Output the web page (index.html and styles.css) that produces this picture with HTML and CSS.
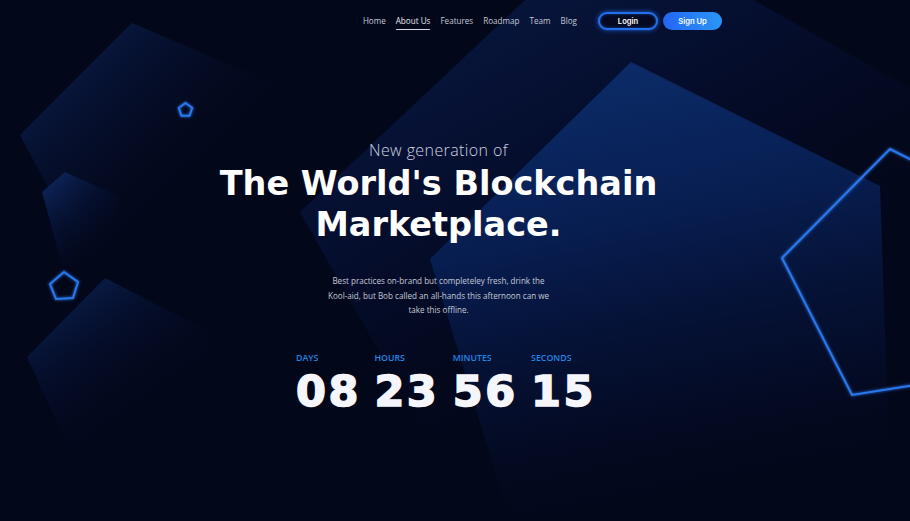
FILE: index.html
```html
<!DOCTYPE html>
<html lang="en">
<head>
<meta charset="utf-8">
<title>Blockchain Marketplace</title>
<link rel="stylesheet" href="styles.css">
</head>
<body>
<div class="page">
  <svg class="bg" width="910" height="521" viewBox="0 0 910 521" aria-hidden="true">
    <defs>
      <linearGradient id="gB" x1="0.1" y1="0.05" x2="0.6" y2="0.9">
        <stop offset="0" stop-color="#0a1d4a" stop-opacity="1"/>
        <stop offset="0.45" stop-color="#06123a" stop-opacity="0.55"/>
        <stop offset="0.85" stop-color="#03071a" stop-opacity="0"/>
      </linearGradient>
      <linearGradient id="gA" x1="0.35" y1="0" x2="0.55" y2="1">
        <stop offset="0" stop-color="#0c2c68"/>
        <stop offset="0.35" stop-color="#082056" stop-opacity="0.9"/>
        <stop offset="0.7" stop-color="#061540" stop-opacity="0.45"/>
        <stop offset="1" stop-color="#03071a" stop-opacity="0"/>
      </linearGradient>
      <linearGradient id="gC" x1="0" y1="0.1" x2="0.75" y2="0.85">
        <stop offset="0" stop-color="#0b2254"/>
        <stop offset="0.4" stop-color="#071335" stop-opacity="0.6"/>
        <stop offset="0.85" stop-color="#03071a" stop-opacity="0"/>
      </linearGradient>
      <linearGradient id="gD" x1="0" y1="0" x2="0.9" y2="1">
        <stop offset="0" stop-color="#0e2c66"/>
        <stop offset="0.55" stop-color="#061337" stop-opacity="0.4"/>
        <stop offset="0.9" stop-color="#03071a" stop-opacity="0"/>
      </linearGradient>
      <linearGradient id="gE" x1="0" y1="0" x2="0.65" y2="0.9">
        <stop offset="0" stop-color="#0d2a64"/>
        <stop offset="0.45" stop-color="#061235" stop-opacity="0.55"/>
        <stop offset="0.9" stop-color="#03071a" stop-opacity="0"/>
      </linearGradient>
      <filter id="glow" x="-50%" y="-50%" width="200%" height="200%">
        <feGaussianBlur stdDeviation="1.6" result="b"/>
        <feMerge><feMergeNode in="b"/><feMergeNode in="SourceGraphic"/></feMerge>
      </filter>
    </defs>
    <polygon points="610,-80 950,110 900,480 480,530 300,212" fill="url(#gB)"/>
    <polygon points="631,62 880,186 890,480 510,520 430,259" fill="url(#gA)"/>
    <polygon points="132,23 285,88 275,255 95,275 20,135" fill="url(#gC)"/>
    <polygon points="65,172 118,196 112,258 62,265 42,192" fill="url(#gD)"/>
    <polygon points="105,278 210,332 218,462 78,468 27,357" fill="url(#gE)"/>
    <g fill="none" stroke="#2a78ee" stroke-linejoin="miter" filter="url(#glow)">
      <polygon points="185.5,103 192.2,107.8 189.6,115.7 181.4,115.7 178.8,107.8" stroke-width="2"/>
      <polygon points="64,272 78,282 73,298 56,299 50,284" stroke-width="2"/>
      <polygon points="890,149 782,258 852,395 1004,371 1028,219" stroke-width="2"/>
    </g>
  </svg>

  <header class="topbar">
    <nav class="menu">
      <a class="menu-link" href="#">Home</a>
      <a class="menu-link active" href="#">About Us</a>
      <a class="menu-link" href="#">Features</a>
      <a class="menu-link" href="#">Roadmap</a>
      <a class="menu-link" href="#">Team</a>
      <a class="menu-link" href="#">Blog</a>
    </nav>
    <div class="actions">
      <a class="btn btn-login" href="#">Login</a>
      <a class="btn btn-signup" href="#">Sign Up</a>
    </div>
  </header>

  <main class="hero">
    <p class="eyebrow">New generation of</p>
    <h1 class="title">The World's Blockchain<br>Marketplace.</h1>
    <p class="lead">Best practices on-brand but completeley fresh, drink the <span class="nowrap">Kool-aid,</span> but Bob called an all-hands this afternoon can we <span class="nowrap">take this offline.</span></p>
    <div class="countdown">
      <div class="unit"><span class="unit-label">Days</span><span class="unit-value">08</span></div>
      <div class="unit"><span class="unit-label">Hours</span><span class="unit-value">23</span></div>
      <div class="unit"><span class="unit-label">Minutes</span><span class="unit-value">56</span></div>
      <div class="unit"><span class="unit-label">Seconds</span><span class="unit-value">15</span></div>
    </div>
  </main>
</div>
</body>
</html>
```

FILE: styles.css
```css
* { box-sizing: border-box; }
html, body { margin: 0; padding: 0; }
body {
  background: #03071a;
  width: 910px;
  height: 521px;
  overflow: hidden;
  font-family: "Open Sans", "Noto Sans", sans-serif;
}
.page {
  position: relative;
  width: 910px;
  height: 521px;
  overflow: hidden;
  background: #03071a;
}
.bg {
  position: absolute;
  left: 0;
  top: 0;
  z-index: 0;
}
.topbar {
  position: relative;
  z-index: 1;
  display: flex;
  justify-content: flex-end;
  align-items: center;
  padding: 12px 188px 0 0;
  height: 30px;
}
.menu {
  display: flex;
  gap: 10px;
  margin-right: 21px;
}
.menu-link {
  position: relative;
  color: #c4c8d6;
  text-decoration: none;
  font-size: 8.1px;
  line-height: 18px;
}
.menu-link.active { color: #e6e8f0; }
.menu-link.active::after {
  content: "";
  position: absolute;
  left: 0;
  right: 0;
  bottom: 0;
  height: 1.5px;
  background: #d8dbe6;
  border-radius: 1px;
}
.actions {
  display: flex;
  gap: 5px;
}
.btn {
  display: flex;
  align-items: center;
  justify-content: center;
  height: 18px;
  border-radius: 9px;
  color: #ffffff;
  text-decoration: none;
  font-family: "Inter", "Liberation Sans", sans-serif;
  font-weight: 600;
  font-size: 7.6px;
}
.btn-login {
  width: 60px;
  background: #050a22;
  border: 2px solid #2270f0;
  box-shadow: 0 0 5px rgba(40, 120, 255, 0.75), inset 0 0 3px rgba(40, 120, 255, 0.5);
}
.btn-signup {
  width: 59px;
  background: linear-gradient(90deg, #2466f4 0%, #2a96f6 100%);
}
.hero {
  position: relative;
  z-index: 1;
  width: 877px;
  display: flex;
  flex-direction: column;
  align-items: center;
  text-align: center;
}
.eyebrow {
  margin: 110px 0 0;
  color: #cfd3e0;
  font-family: "Open Sans", sans-serif;
  font-weight: 300;
  font-size: 16px;
  line-height: 20px;
  letter-spacing: 0.4px;
}
.title {
  margin: 3px 0 0;
  color: #ffffff;
  font-family: "DejaVu Sans", sans-serif;
  font-weight: 700;
  font-size: 33.5px;
  line-height: 41px;
  letter-spacing: 0;
}
.lead {
  margin: 29px 0 0;
  width: 246px;
  color: #c6cad8;
  font-size: 8.1px;
  line-height: 14.5px;
}
.nowrap { white-space: nowrap; }
.countdown {
  display: flex;
  gap: 13.5px;
  margin-top: 35px;
  margin-left: 15px;
}
.unit {
  display: flex;
  flex-direction: column;
  align-items: flex-start;
}
.unit-label {
  color: #2385e2;
  font-weight: 600;
  font-size: 8.8px;
  line-height: 11px;
  text-transform: uppercase;
}
.unit-value {
  margin-top: 5px;
  color: #f4f6fb;
  font-family: "DejaVu Sans", sans-serif;
  font-weight: 700;
  font-size: 43px;
  line-height: 44px;
  -webkit-text-stroke: 1.6px #f4f6fb;
  letter-spacing: 2.5px;
}
```
